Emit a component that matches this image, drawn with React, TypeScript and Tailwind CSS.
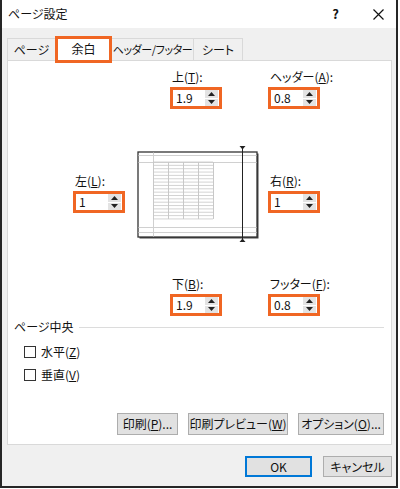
import React from "react";

const F = "font-['Noto_Sans_CJK_JP','Liberation_Sans',sans-serif] [font-feature-settings:'palt'] whitespace-nowrap";

function Spin({ value }: { value: string }) {
  return (
    <div className="w-[52px] h-[22px] border-[3px] border-[#f06623] bg-white flex items-center">
      <span className="flex-1 pl-[3px] text-[12px] leading-none text-[#111]">{value}</span>
      <div className="flex flex-col w-[13px] h-[16px] mr-[1px] gap-[1px]">
        <div className="flex-1 bg-[#e3e3e3] flex items-center justify-center">
          <svg width="7" height="4" viewBox="0 0 7 4"><path d="M0 4 L3.5 0 L7 4 Z" fill="#222" /></svg>
        </div>
        <div className="flex-1 bg-[#e3e3e3] flex items-center justify-center">
          <svg width="7" height="4" viewBox="0 0 7 4"><path d="M0 0 L3.5 4 L7 0 Z" fill="#222" /></svg>
        </div>
      </div>
    </div>
  );
}

function Field({ label, k, value, className = "" }: { label: string; k: string; value: string; className?: string }) {
  return (
    <div className={"flex flex-col " + className}>
      <div className="text-[12px] leading-[16px] h-[16px] mb-[2px] pl-[2px] text-[#111]">
        {label}(<span className="underline">{k}</span>):
      </div>
      <Spin value={value} />
    </div>
  );
}

function Preview() {
  const rows: number[] = [];
  for (let i = 0; i <= 17; i++) rows.push(18 + i * 3.35);
  const cols = [18, 33, 48, 63, 78];
  return (
    <svg width="130" height="98" viewBox="0 0 130 98">
      <rect x="4.5" y="9.5" width="119" height="85" fill="#444" />
      <rect x="3" y="8" width="119" height="85" fill="#fff" stroke="#333" strokeWidth="1.3" />
      <line x1="3.5" y1="11.5" x2="121.5" y2="11.5" stroke="#d0d0d0" strokeWidth="1" />
      <line x1="3.5" y1="18.5" x2="121.5" y2="18.5" stroke="#d0d0d0" strokeWidth="1" />
      <line x1="3.5" y1="83.5" x2="121.5" y2="83.5" stroke="#d0d0d0" strokeWidth="1" />
      <line x1="3.5" y1="88.5" x2="121.5" y2="88.5" stroke="#d0d0d0" strokeWidth="1" />
      <line x1="18.5" y1="8.5" x2="18.5" y2="92.5" stroke="#d0d0d0" strokeWidth="1" />
      {rows.map((y, i) => (
        <line key={"r" + i} x1="18" y1={y} x2="78" y2={y} stroke="#c8c8c8" strokeWidth="0.8" />
      ))}
      {cols.map((x, i) => (
        <line key={"c" + i} x1={x + 0.5} y1="18" x2={x + 0.5} y2={rows[rows.length - 1]} stroke="#c8c8c8" strokeWidth="1" />
      ))}
      <line x1="107.5" y1="4" x2="107.5" y2="96" stroke="#222" strokeWidth="1" />
      <path d="M104.5 2 L110.5 2 L107.5 5.5 Z" fill="#222" />
      <path d="M104.5 98 L110.5 98 L107.5 94.5 Z" fill="#222" />
    </svg>
  );
}

function Check({ label, k }: { label: string; k: string }) {
  return (
    <div className="flex items-center h-[16px]">
      <div className="w-[12px] h-[12px] border border-[#333] bg-white" />
      <span className="ml-[5px] text-[12px] leading-[16px] text-[#111]">
        {label}(<span className="underline">{k}</span>)
      </span>
    </div>
  );
}

function Btn({ children, w }: { children: React.ReactNode; w: string }) {
  return (
    <div className={"h-[22px] bg-[#e1e1e1] border border-[#adadad] flex items-center justify-center text-[12px] text-[#111] " + w}>
      {children}
    </div>
  );
}

export default function App() {
  return (
    <div className={"w-[400px] h-[489px] bg-white " + F}>
      <div className="w-[398px] h-[488px] border-l-2 border-r-2 border-b-2 border-[#262626] bg-[#f0f0f0] flex flex-col">
        {/* title bar */}
        <div className="h-[28px] bg-white flex items-center">
          <span className="pl-[6px] text-[12px] text-[#111]">ページ設定</span>
          <span className="ml-auto text-[13px] font-bold text-[#111] mr-[34px]">?</span>
          <svg className="mr-[12px]" width="11" height="11" viewBox="0 0 11 11">
            <path d="M0.5 0.5 L10.5 10.5 M10.5 0.5 L0.5 10.5" stroke="#111" strokeWidth="1.2" />
          </svg>
        </div>
        {/* tabs */}
        <div className="h-[32px] flex items-end pl-[5px]">
          <div className="w-[48px] h-[22px] bg-[#f0f0f0] border-t border-l border-[#d9d9d9] flex items-center justify-center text-[12px] text-[#111]">ページ</div>
          <div className="relative z-10 w-[57px] h-[27px] mb-[-3px] bg-white border-[3px] border-[#f06623] flex items-center justify-center text-[12px] text-[#111] pb-[2px]">余白</div>
          <div className="w-[82px] h-[22px] bg-[#f0f0f0] border-t border-r border-[#d9d9d9] flex items-center justify-center text-[11px] tracking-[-0.4px] text-[#111]">ヘッダー/フッター</div>
          <div className="w-[49px] h-[22px] bg-[#f0f0f0] border-t border-r border-[#d9d9d9] flex items-center justify-center text-[12px] text-[#111]">シート</div>
        </div>
        {/* panel */}
        <div className="ml-[5px] w-[385px] h-[385px] bg-white border border-[#d9d9d9] flex flex-col">
          <div className="flex pt-[8px] pl-[162px]">
            <Field label="上" k="T" value="1.9" className="w-[98px]" />
            <Field label="ヘッダー" k="A" value="0.8" />
          </div>
          <div className="flex mt-[35px] pl-[65px]">
            <Field label="左" k="L" value="1" className="w-[62px] pt-[29px]" />
            <Preview />
            <Field label="右" k="R" value="1" className="ml-[3px] pt-[29px]" />
          </div>
          <div className="flex mt-[34px] pl-[162px]">
            <Field label="下" k="B" value="1.9" className="w-[98px]" />
            <Field label="フッター" k="F" value="0.8" />
          </div>
          <div className="flex items-center mt-[3px] pl-[6px] pr-[7px] h-[16px]">
            <span className="text-[12px] leading-[16px] text-[#111]">ページ中央</span>
            <div className="flex-1 h-px bg-[#dcdcdc] ml-[5px]" />
          </div>
          <div className="flex flex-col pl-[16px] mt-[9px] gap-[7px]">
            <Check label="水平" k="Z" />
            <Check label="垂直" k="V" />
          </div>
          <div className="mt-auto mb-[9px] pr-[7px] flex justify-end gap-[10px]">
            <Btn w="w-[61px]">印刷(<span className="underline">P</span>)...</Btn>
            <Btn w="w-[100px]">印刷プレビュー(<span className="underline">W</span>)</Btn>
            <Btn w="w-[86px]">オプション(<span className="underline">O</span>)...</Btn>
          </div>
        </div>
        <div className="flex justify-end pr-[4px] mt-[11px] gap-[11px]">
          <div className="w-[67px] h-[21px] bg-[#e1e1e1] border-2 border-[#0078d7] flex items-center justify-center text-[12px] text-[#111]">OK</div>
          <div className="w-[69px] h-[21px] bg-[#e1e1e1] border border-[#adadad] flex items-center justify-center text-[12px] text-[#111]">キャンセル</div>
        </div>
      </div>
    </div>
  );
}
